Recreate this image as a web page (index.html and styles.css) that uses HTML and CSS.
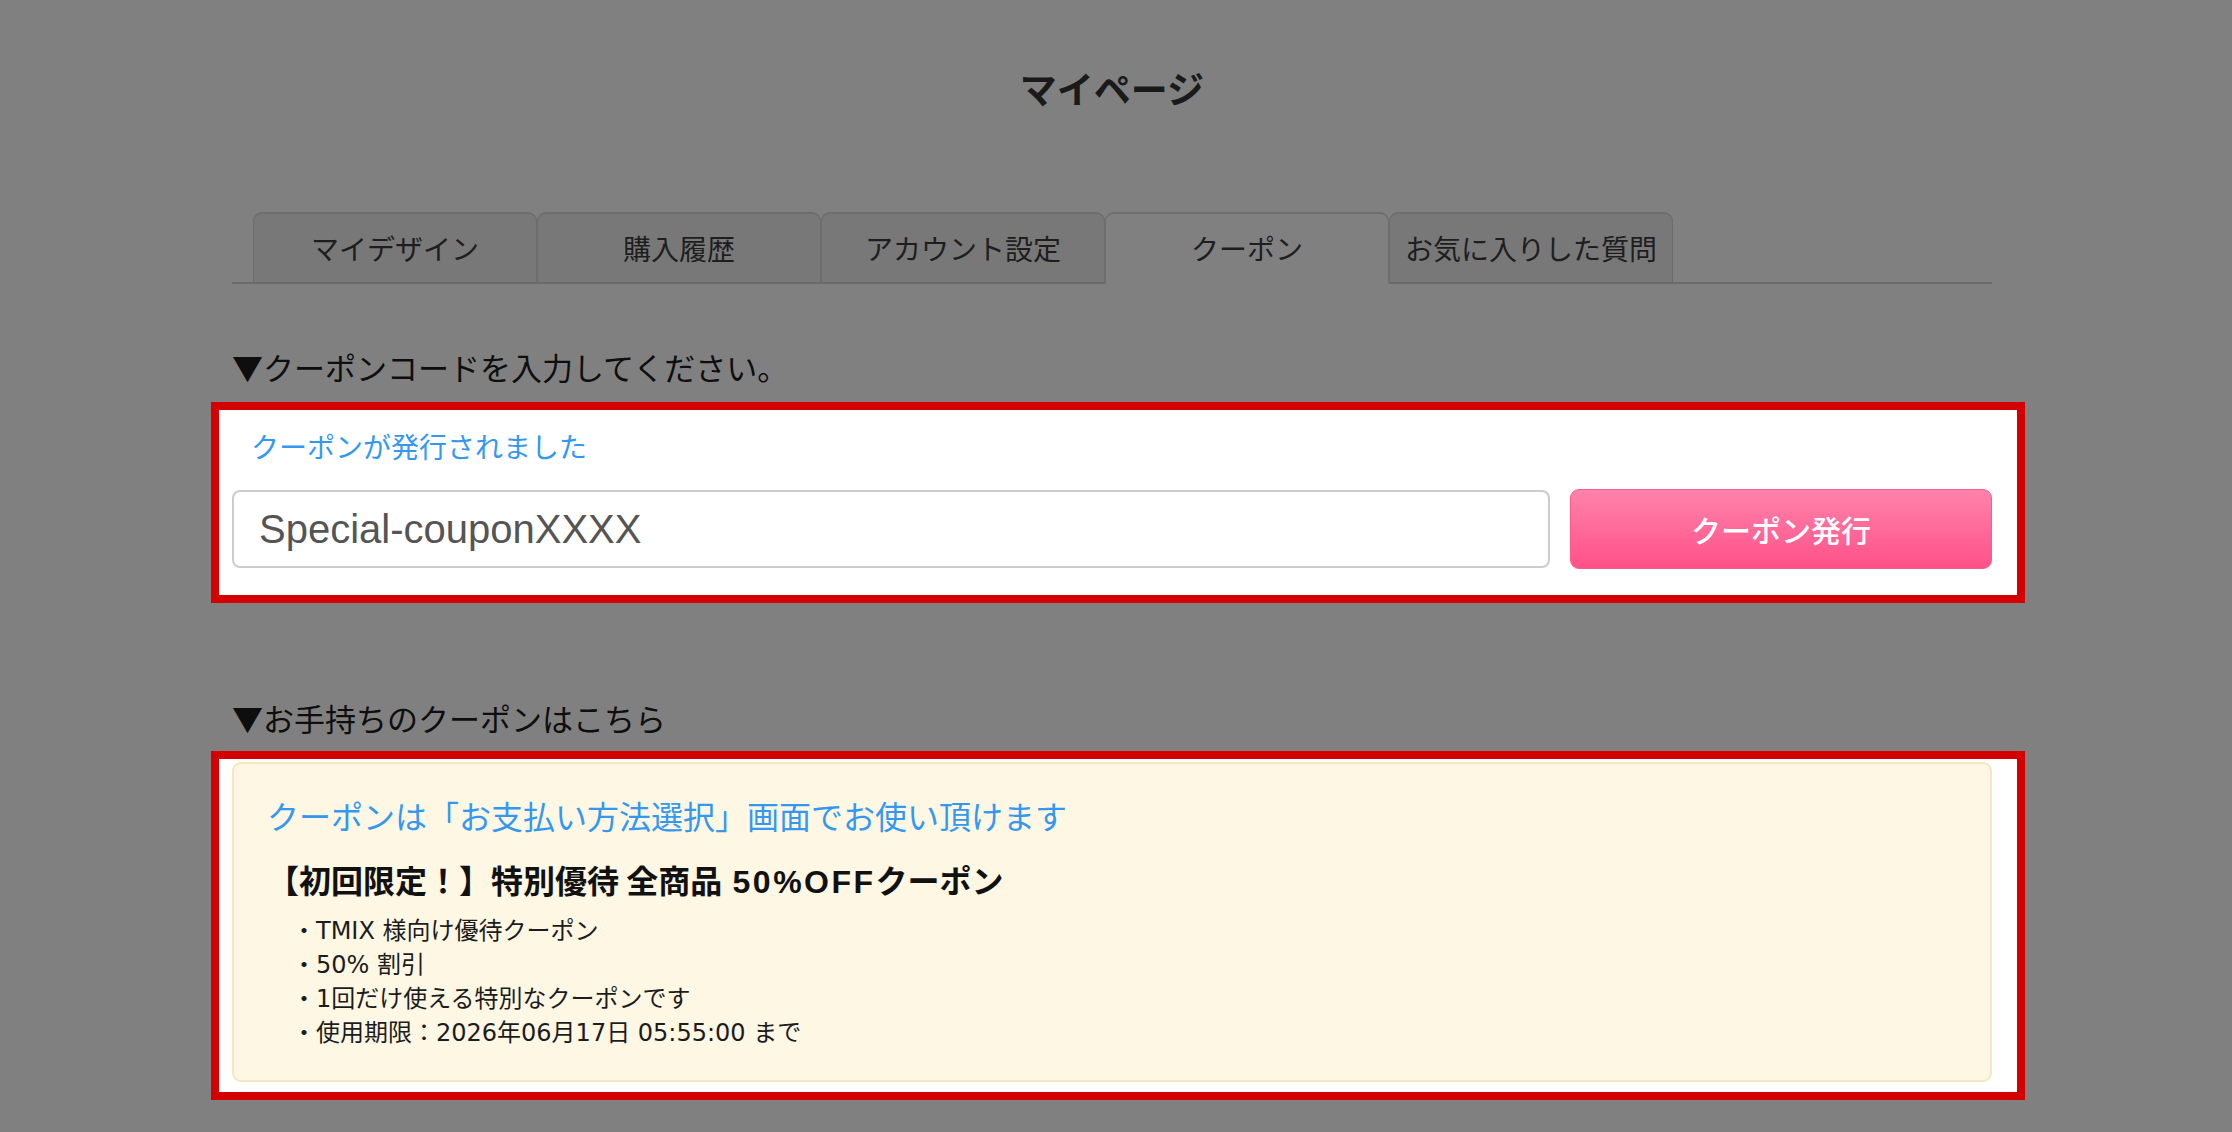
FILE: index.html
```html
<!DOCTYPE html>
<html lang="ja">
<head>
<meta charset="utf-8">
<title>マイページ</title>
<link rel="stylesheet" href="styles.css">
</head>
<body>
<div class="page">
  <h1 class="page-title">マイページ</h1>

  <nav class="tabs">
    <div class="tab">マイデザイン</div>
    <div class="tab">購入履歴</div>
    <div class="tab">アカウント設定</div>
    <div class="tab tab-active">クーポン</div>
    <div class="tab">お気に入りした質問</div>
  </nav>

  <h2 class="section-heading heading-code">▼クーポンコードを入力してください。</h2>
  <section class="highlight highlight-code">
    <p class="notice">クーポンが発行されました</p>
    <div class="code-row">
      <input class="code-input" type="text" value="Special-couponXXXX">
      <button class="issue-btn" type="button">クーポン発行</button>
    </div>
  </section>

  <h2 class="section-heading heading-list">▼お手持ちのクーポンはこちら</h2>
  <section class="highlight highlight-list">
    <div class="coupon-card">
      <p class="card-notice">クーポンは「お支払い方法選択」画面でお使い頂けます</p>
      <h3 class="coupon-title">【初回限定！】特別優待 全商品 <span class="latin">50%OFF</span>クーポン</h3>
      <ul class="coupon-details">
        <li>・TMIX 様向け優待クーポン</li>
        <li>・50% 割引</li>
        <li>・1回だけ使える特別なクーポンです</li>
        <li>・使用期限：2026年06月17日 05:55:00 まで</li>
      </ul>
    </div>
  </section>
</div>
</body>
</html>
```

FILE: styles.css
```css
html, body {
  margin: 0;
  background: #808080;
}
body {
  padding: 0 8px 0 0;
  font-family: "Noto Sans CJK JP", sans-serif;
  color: #111;
}
.page {
  width: 1760px;
  margin: 0 auto;
  padding-top: 60px;
}
.page-title {
  margin: 0;
  text-align: center;
  font-size: 37px;
  line-height: 56px;
  font-weight: bold;
  color: #1a1a1a;
}

/* tabs */
.tabs {
  display: flex;
  margin-top: 96px;
  padding-left: 21px;
  border-bottom: 2px solid #6b6b6b;
}
.tab {
  box-sizing: border-box;
  width: 284px;
  height: 72px;
  margin-bottom: -2px;
  border: 1px solid #6d6d6d;
  border-top-width: 2px;
  border-bottom: 2px solid #6b6b6b;
  border-radius: 9px 9px 0 0;
  background: #787878;
  display: flex;
  align-items: center;
  justify-content: center;
  font-size: 28px;
  color: #1e1e1e;
  white-space: nowrap;
}
.tab-active {
  background: #808080;
  border-bottom-color: #808080;
}

/* headings */
.section-heading {
  margin: 0;
  font-size: 31px;
  line-height: 46px;
  font-weight: normal;
  color: #0e0e0e;
}
.heading-code {
  margin-top: 60px;
  margin-bottom: 12px;
}
.heading-list {
  margin-top: 92px;
  margin-bottom: 10px;
}

/* highlight frames */
.highlight {
  margin: 0 -33px 0 -21px;
  border: 8px solid #d40000;
  background: #fff;
  padding: 0 25px 0 13px;
}
.highlight-code {
  padding-top: 16px;
  padding-bottom: 26px;
}
.highlight-list {
  padding-top: 3px;
  padding-bottom: 10px;
}

.notice {
  margin: 0 0 23px;
  padding-left: 19px;
  font-size: 28px;
  line-height: 40px;
  color: #3598f0;
}
.code-row {
  display: flex;
  align-items: center;
  gap: 20px;
}
.code-input {
  flex: 1;
  box-sizing: border-box;
  height: 78px;
  margin: 0;
  padding: 0 25px;
  border: 2px solid #cccccc;
  border-radius: 8px;
  background: #fff;
  font-family: "Liberation Sans", Arial, sans-serif;
  font-size: 40px;
  color: #555;
  outline: none;
}
.issue-btn {
  box-sizing: border-box;
  width: 422px;
  height: 80px;
  margin: 0;
  border: 1px solid #ff5a8c;
  border-radius: 9px;
  background: linear-gradient(to bottom, #ff83aa, #ff5189);
  font-family: "Noto Sans CJK JP", sans-serif;
  font-size: 30px;
  font-weight: 500;
  color: #fff;
  padding: 0;
}

/* coupon card */
.coupon-card {
  border: 2px solid #f7e6c0;
  border-radius: 9px;
  background: #fdf7e4;
  padding: 27px 20px 30px 33px;
}
.card-notice {
  margin: 0;
  font-size: 32px;
  line-height: 48px;
  color: #3598f0;
}
.coupon-title {
  margin: 16px 0 0;
  font-size: 32px;
  line-height: 48px;
  font-weight: bold;
  color: #111;
}
.coupon-title .latin {
  font-family: "Liberation Sans", sans-serif;
  line-height: 1;
  letter-spacing: 2.5px;
  padding-left: 3px;
}
.coupon-details {
  list-style: none;
  margin: 11px 0 0;
  padding: 0 0 0 25px;
  font-family: "DejaVu Sans", "Noto Sans CJK JP", sans-serif;
  font-size: 24px;
  line-height: 34px;
  color: #1c1c1c;
}
```
